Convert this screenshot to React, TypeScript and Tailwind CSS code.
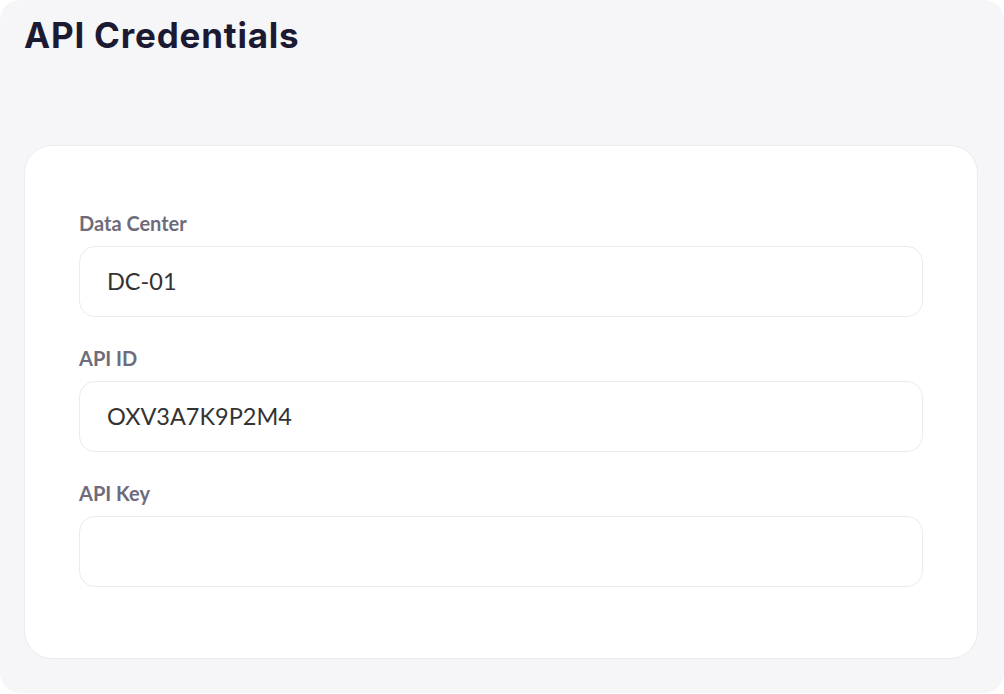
const fields = [
  { label: "Data Center", value: "DC-01" },
  { label: "API ID", value: "OXV3A7K9P2M4" },
  { label: "API Key", value: "" },
];

export default function App() {
  return (
    <div className="w-[1004px] h-[694px] bg-white">
      <div className="w-[1004px] h-[693px] bg-[#f6f6f8] rounded-[20px] px-6 pt-[13px]">
        <h1 className="font-['Inter',sans-serif] font-bold text-[35px] leading-[44px] text-[#1c1a33] tracking-[0.8px]">
          API Credentials
        </h1>
        <div className="mt-[88px] w-[954px] bg-white border border-[#ebebef] rounded-[28px] px-[54px] pt-[66px] pb-[71px] font-['Lato',sans-serif]">
          <div className="flex flex-col gap-[30px]">
            {fields.map((f) => (
              <div key={f.label} className="flex flex-col gap-[12px]">
                <label className="text-[20px] leading-[22px] font-bold text-[#6e6c7a]">{f.label}</label>
                <div className="h-[71px] border border-[#ebebef] rounded-[16px] px-[27px] flex items-center text-[23.5px] text-[#333333]">
                  {f.value}
                </div>
              </div>
            ))}
          </div>
        </div>
      </div>
    </div>
  );
}
